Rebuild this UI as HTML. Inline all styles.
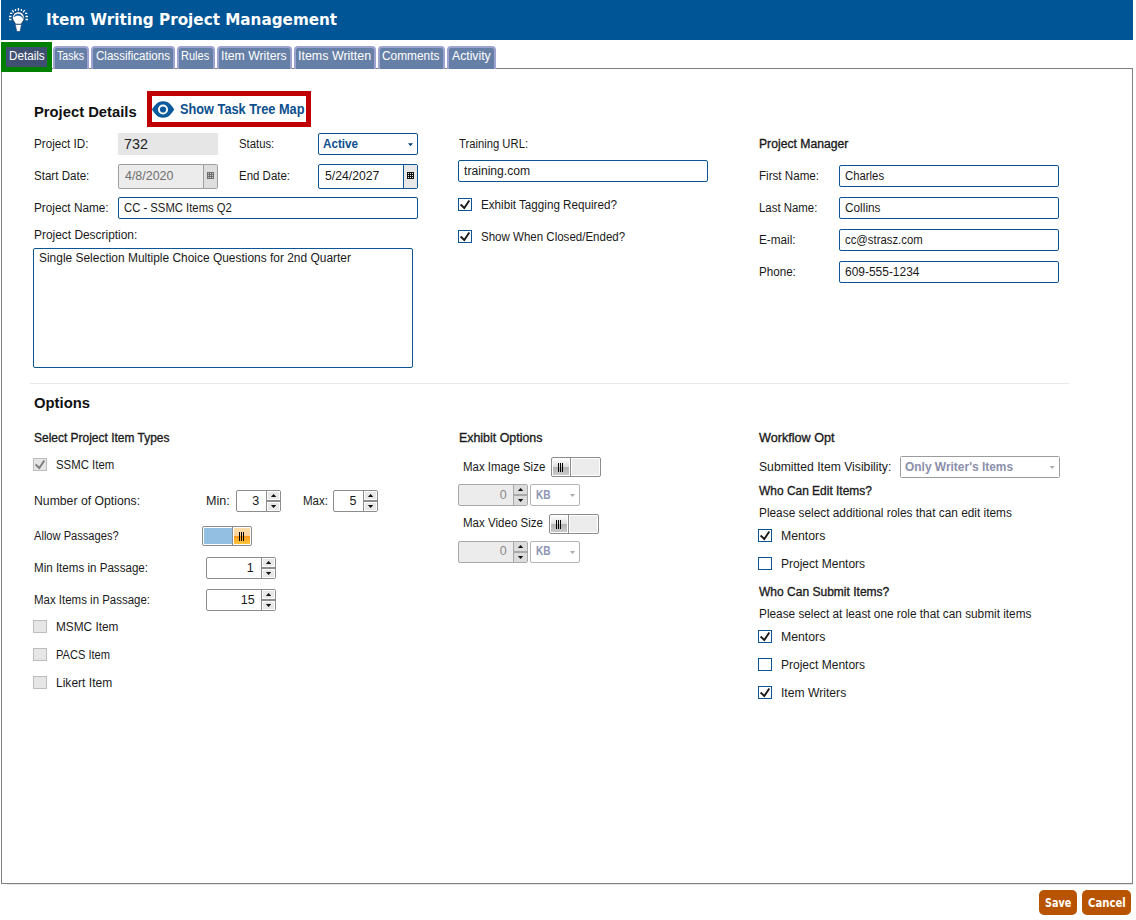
<!DOCTYPE html>
<html><head><meta charset="utf-8"><title>Item Writing Project Management</title>
<style>
*{box-sizing:border-box;margin:0;padding:0}
html,body{width:1136px;height:920px;background:#fff;overflow:hidden}
body{position:relative;font-family:"Liberation Sans","DejaVu Sans",sans-serif;font-size:12px;color:#1a1a1a}
.a{position:absolute}
.x{position:absolute;white-space:nowrap;line-height:20px;transform-origin:0 0}
.hdr{left:1px;top:0;width:1132px;height:40px;background:#005596}
.tab{top:46px;height:23px;background:#667fa7;border:2px solid #9ea3d0;border-bottom:none;border-radius:4px 4px 0 0}
.tabsel{left:1px;top:42px;width:51px;height:30px;background:#3f4f72;border:5px solid #008000}
.panel{left:1px;top:68px;width:1132px;height:816px;border:1px solid #808080;background:#fff}
.inp{border:1px solid #0b5596;border-radius:2px;background:#fff}
.cb{width:14px;height:13px;border:1px solid #0b5596;background:#fff}
.cbd{border-color:#bdbdbd;background:#e6e6e6}
.spin{height:22px;border:1px solid #8c8c8c;border-radius:2px;background:#fff;overflow:hidden}
.spin i{position:absolute;right:0;top:0;width:14px;height:20px;border-left:1px solid #8c8c8c;background:#fff}
.spin i:before{content:"";position:absolute;left:1px;top:1px;width:11px;height:7px;background:#e8e8e8}
.spin i:after{content:"";position:absolute;left:1px;top:12px;width:11px;height:7px;background:#e8e8e8}
.spin b{position:absolute;right:0;top:9px;width:13px;height:2px;background:#8c8c8c}
.spin.d{background:#ececec;border-color:#a8a8a8}
.spin.d i{border-color:#a8a8a8;background:#dcdcdc}
.spin.d i:before,.spin.d i:after{background:#dcdcdc}
.spin.d b{background:#a8a8a8}
.tri{position:absolute;width:5.400px;height:3px;background:#111}
.up{clip-path:polygon(50% 0,100% 100%,0 100%)}
.dn{clip-path:polygon(0 0,100% 0,50% 100%)}
.tog{width:50px;height:20px;border:1px solid #8c8c8c;border-radius:2px;background:#fff}
.btn{top:890px;height:25px;background:#b85400;border-radius:5px}
</style></head><body>
<div class="a hdr"></div>
<svg class="a" style="left:4px;top:4px" width="30" height="32" viewBox="4 4 30 32">
<g stroke="#fff" stroke-width="1.3" stroke-linecap="butt" fill="none">
<path d="M18.400 8v2.800M15.500 9v1.900M21.400 9v1.900M12.200 10.200l1.700 2.100M24.700 10.200l-1.700 2.100M10 13.400h2.300M9 16.500h2.400M9 19.500h2.400M25 13.400h2.300M25.500 16.500h2.400M25.500 19.500h2.400"/>
</g>
<path d="M18.400 11.700a5.900 5.900 0 0 0-5.900 5.900c0 2 .9 3.300 1.900 4.500.6.700.8 1.400.9 2.100h6.200c.100-.700.300-1.400.900-2.100 1-1.200 1.900-2.500 1.900-4.500a5.900 5.900 0 0 0-5.900-5.900z" fill="#fff" stroke="#1e3558" stroke-width=".8"/>
<path d="M15.300 24.500h6.200l-1.300 6.200c-.1.500-.5.800-1 .8h-1.600c-.5 0-.9-.3-1-.8z" fill="#fff" stroke="#27406a" stroke-width=".6"/>
<path d="M15.200 28.200h6.400" stroke="#27406a" stroke-width=".5" opacity=".0"/>
<path d="M14 16.800C15.300 13 21.800 12.200 23.300 18.700C21.300 14.600 16.600 14.700 14 16.800z" fill="#0a5a9c" stroke="#0a5a9c" stroke-width=".5" stroke-linejoin="round"/>
</svg>

<div class="a" style="left:7px;top:884px;width:1126px;height:1px;background:#e6e6e6"></div>
<div class="a panel"></div>
<div class="a tabsel"></div>
<div class="a tab" style="left:52.500px;width:36.500px"></div>
<div class="a tab" style="left:91px;width:84px"></div>
<div class="a tab" style="left:177px;width:38px"></div>
<div class="a tab" style="left:217px;width:75px"></div>
<div class="a tab" style="left:294px;width:82px"></div>
<div class="a tab" style="left:378px;width:67px"></div>
<div class="a tab" style="left:447px;width:49px"></div>

<!-- red highlight + eye -->
<div class="a" style="left:147px;top:91px;width:164px;height:36px;border:5px solid #c00000"></div>
<svg class="a" style="left:151px;top:100px" width="24" height="19" viewBox="151 100 24 19">
<path d="M152 109.500C153.800 106.400 156.200 103.600 158.400 102.300C160 101.500 161.500 101.200 163 101.200C164.600 101.200 166.200 101.500 167.800 102.300C170 103.600 172.400 106.400 174.200 109.500C172.400 112.600 170 115.400 167.800 116.700C166.200 117.500 164.600 117.800 163 117.800C161.500 117.800 160 117.500 158.400 116.700C156.200 115.400 153.800 112.600 152 109.500Z" fill="#0b5a9d"/>
<circle cx="163" cy="109.500" r="5" fill="#fff"/><circle cx="163" cy="109.500" r="3.100" fill="#0b5a9d"/>
</svg>

<!-- project details fields -->
<div class="a" style="left:118px;top:133px;width:100px;height:22px;background:#e6e6e6"></div>
<div class="a inp" style="left:318px;top:133px;width:100px;height:22px"></div>
<div class="tri dn" style="left:408px;top:143.200px;width:5px;background:#0b3f74"></div>
<div class="a inp" style="left:118px;top:164px;width:100px;height:25px;background:#ececec;border-color:#a0a0a0"></div>
<div class="a" style="left:203px;top:165px;width:14px;height:23px;background:#dedede;border-left:1px solid #a0a0a0;border-radius:0 1px 1px 0"></div>
<svg class="a" style="left:207px;top:172px" width="7" height="7" viewBox="0 0 7 7"><rect width="7" height="7" fill="#6e6e6e"/><g fill="#cfcfcf"><rect x="1" y="1" width="1" height="1"/><rect x="3" y="1" width="1" height="1"/><rect x="5" y="1" width="1" height="1"/><rect x="1" y="3" width="1" height="1"/><rect x="3" y="3" width="1" height="1"/><rect x="5" y="3" width="1" height="1"/><rect x="1" y="5" width="1" height="1"/><rect x="3" y="5" width="1" height="1"/><rect x="5" y="5" width="1" height="1"/></g></svg>
<div class="a inp" style="left:318px;top:164px;width:100px;height:25px"></div>
<div class="a" style="left:403px;top:165px;width:14px;height:23px;background:#e8e8e8;border-left:1px solid #0b5596;border-radius:0 1px 1px 0"></div>
<svg class="a" style="left:407px;top:172px" width="7" height="7" viewBox="0 0 7 7"><rect width="7" height="7" fill="#111"/><g fill="#e8e8e8"><rect x="1" y="1" width="1" height="1"/><rect x="3" y="1" width="1" height="1"/><rect x="5" y="1" width="1" height="1"/><rect x="1" y="3" width="1" height="1"/><rect x="3" y="3" width="1" height="1"/><rect x="5" y="3" width="1" height="1"/><rect x="1" y="5" width="1" height="1"/><rect x="3" y="5" width="1" height="1"/><rect x="5" y="5" width="1" height="1"/></g></svg>
<div class="a inp" style="left:118px;top:197px;width:300px;height:22px"></div>
<div class="a inp" style="left:33px;top:248px;width:380px;height:120px"></div>

<div class="a inp" style="left:458px;top:160px;width:250px;height:22px"></div>
<div class="a cb" style="left:458px;top:198px"></div>
<div class="a cb" style="left:458px;top:230px"></div>

<div class="a inp" style="left:839px;top:165px;width:220px;height:22px"></div>
<div class="a inp" style="left:839px;top:197px;width:220px;height:22px"></div>
<div class="a inp" style="left:839px;top:229px;width:220px;height:22px"></div>
<div class="a inp" style="left:839px;top:261px;width:220px;height:22px"></div>

<div class="a" style="left:30px;top:383px;width:1039px;height:1px;background:#e9e9e9"></div>

<!-- options left -->
<div class="a cb cbd" style="left:33px;top:458px"></div>
<div class="a cb cbd" style="left:33px;top:620px"></div>
<div class="a cb cbd" style="left:33px;top:648px"></div>
<div class="a cb cbd" style="left:33px;top:676px"></div>

<div class="a spin" style="left:236px;top:490px;width:45px"><i></i><b></b><div class="tri up" style="left:33.900px;top:3px"></div><div class="tri dn" style="left:33.900px;top:14px"></div></div>
<div class="a spin" style="left:333px;top:490px;width:45px"><i></i><b></b><div class="tri up" style="left:33.900px;top:3px"></div><div class="tri dn" style="left:33.900px;top:14px"></div></div>
<div class="a spin" style="left:206px;top:557px;width:70px"><i></i><b></b><div class="tri up" style="left:58.900px;top:3px"></div><div class="tri dn" style="left:58.900px;top:14px"></div></div>
<div class="a spin" style="left:206px;top:589px;width:70px"><i></i><b></b><div class="tri up" style="left:58.900px;top:3px"></div><div class="tri dn" style="left:58.900px;top:14px"></div></div>

<!-- toggle on -->
<div class="a tog" style="left:202px;top:526px"></div>
<div class="a" style="left:204px;top:528px;width:28px;height:16px;background:#92bfe2"></div>
<div class="a" style="left:232px;top:527px;width:1px;height:18px;background:#8c8c8c"></div>
<div class="a" style="left:234px;top:528px;width:16px;height:16px;background:linear-gradient(#ffdcaa 0,#ffd39a 50%,#ff981c 50%,#ffc53e 100%)"></div>
<div class="a" style="left:239px;top:532px;width:5px;height:9px;background:linear-gradient(90deg,#000 0 1px,transparent 1px 2px,#000 2px 3px,transparent 3px 4px,#000 4px 5px)"></div>

<!-- exhibit toggles -->
<div class="a tog" style="left:551px;top:457px"></div>
<div class="a" style="left:553px;top:459px;width:16px;height:16px;background:linear-gradient(#fdfdfd 0,#dedede 50%,#b2b2b2 50%,#cacaca 100%)"></div>
<div class="a" style="left:570px;top:458px;width:1px;height:18px;background:#8c8c8c"></div>
<div class="a" style="left:572px;top:459px;width:27px;height:16px;background:#ececec"></div>
<div class="a" style="left:558px;top:463px;width:5px;height:9px;background:linear-gradient(90deg,#000 0 1px,transparent 1px 2px,#000 2px 3px,transparent 3px 4px,#000 4px 5px)"></div>

<div class="a tog" style="left:549px;top:514px"></div>
<div class="a" style="left:551px;top:516px;width:16px;height:16px;background:linear-gradient(#fdfdfd 0,#dedede 50%,#b2b2b2 50%,#cacaca 100%)"></div>
<div class="a" style="left:568px;top:515px;width:1px;height:18px;background:#8c8c8c"></div>
<div class="a" style="left:570px;top:516px;width:27px;height:16px;background:#ececec"></div>
<div class="a" style="left:556px;top:520px;width:5px;height:9px;background:linear-gradient(90deg,#000 0 1px,transparent 1px 2px,#000 2px 3px,transparent 3px 4px,#000 4px 5px)"></div>

<div class="a spin d" style="left:458px;top:484px;width:70px"><i></i><b></b><div class="tri up" style="left:58.900px;top:3px"></div><div class="tri dn" style="left:58.900px;top:14px"></div></div>
<div class="a" style="left:530px;top:484px;width:50px;height:22px;border:1px solid #b4b4b4;border-radius:2px;background:#fff"></div>
<div class="tri dn" style="left:569.800px;top:494px;background:#b0b0b0"></div>
<div class="a spin d" style="left:458px;top:541px;width:70px"><i></i><b></b><div class="tri up" style="left:58.900px;top:3px"></div><div class="tri dn" style="left:58.900px;top:14px"></div></div>
<div class="a" style="left:530px;top:541px;width:50px;height:22px;border:1px solid #b4b4b4;border-radius:2px;background:#fff"></div>
<div class="tri dn" style="left:569.800px;top:551px;background:#b0b0b0"></div>

<!-- workflow -->
<div class="a" style="left:900px;top:456px;width:160px;height:22px;border:1px solid #9c9c9c;border-radius:1.500px;background:#fff"></div>
<div class="tri dn" style="left:1049.500px;top:466px;background:#b0b0b0"></div>
<div class="a cb" style="left:758px;top:529px"></div>
<div class="a cb" style="left:758px;top:557px"></div>
<div class="a cb" style="left:758px;top:630px"></div>
<div class="a cb" style="left:758px;top:658px"></div>
<div class="a cb" style="left:758px;top:686px"></div>

<!-- check marks -->
<svg class="a" style="left:0;top:0;pointer-events:none" width="1136" height="920">
<g fill="none" stroke="#1a1a1a" stroke-width="1.900" stroke-linejoin="miter">
<path id="ck" d="M460.600 204.500l3.700 3.500 5-7.600"/>
<path d="M460.600 236.500l3.700 3.500 5-7.600"/>
<path d="M760.600 535.500l3.700 3.500 5-7.600"/>
<path d="M760.600 636.500l3.700 3.500 5-7.600"/>
<path d="M760.600 692.500l3.700 3.500 5-7.600"/>
</g>
<path d="M35.600 464.500l3.700 3.500 5-7.600" fill="none" stroke="#7d7d7d" stroke-width="1.900"/>
</svg>

<div class="a btn" style="left:1039px;width:38px"></div>
<div class="a btn" style="left:1082px;width:49px"></div>

<div class="x" style="left:45.98px;top:10.00px;font-size:16.5px;font-weight:bold;color:#fff;font-family:'DejaVu Sans Condensed','Liberation Sans',sans-serif;transform:scaleX(1.0242);">Item Writing Project Management</div>
<div class="x" style="left:8.80px;top:46.00px;font-size:12px;color:#fff;transform:scaleX(0.9733);">Details</div>
<div class="x" style="left:56.80px;top:46.00px;font-size:12px;color:#fff;transform:scaleX(0.8786);">Tasks</div>
<div class="x" style="left:95.55px;top:46.00px;font-size:12px;color:#fff;transform:scaleX(0.9642);">Classifications</div>
<div class="x" style="left:181.30px;top:46.00px;font-size:12px;color:#fff;transform:scaleX(0.9192);">Rules</div>
<div class="x" style="left:220.98px;top:46.00px;font-size:12px;color:#fff;transform:scaleX(1.0182);">Item Writers</div>
<div class="x" style="left:298.06px;top:46.00px;font-size:12px;color:#fff;transform:scaleX(1.0380);">Items Written</div>
<div class="x" style="left:382.30px;top:46.00px;font-size:12px;color:#fff;transform:scaleX(0.9894);">Comments</div>
<div class="x" style="left:451.70px;top:46.00px;font-size:12px;color:#fff;transform:scaleX(1.0183);">Activity</div>
<div class="x" style="left:33.72px;top:102.00px;font-size:15px;font-weight:bold;color:#111;transform:scaleX(0.9848);">Project Details</div>
<div class="x" style="left:180.00px;top:99.00px;font-size:14px;font-weight:bold;color:#0b4f8e;transform:scaleX(0.9110);">Show Task Tree Map</div>
<div class="x" style="left:33.80px;top:134.00px;font-size:12px;transform:scaleX(0.9734);">Project ID:</div>
<div class="x" style="left:123.80px;top:134.00px;font-size:15.5px;color:#222;transform:scaleX(0.9231);">732</div>
<div class="x" style="left:238.80px;top:134.00px;font-size:12px;transform:scaleX(0.9441);">Status:</div>
<div class="x" style="left:323.20px;top:134.00px;font-size:13px;font-weight:bold;color:#0b4f8e;transform:scaleX(0.8972);">Active</div>
<div class="x" style="left:33.80px;top:166.00px;font-size:12px;transform:scaleX(0.9636);">Start Date:</div>
<div class="x" style="left:124.80px;top:166.20px;font-size:13px;color:#6e6e6e;transform:scaleX(0.9569);">4/8/2020</div>
<div class="x" style="left:238.80px;top:166.00px;font-size:12px;transform:scaleX(0.9560);">End Date:</div>
<div class="x" style="left:325.20px;top:166.00px;font-size:13px;transform:scaleX(0.9392);">5/24/2027</div>
<div class="x" style="left:33.80px;top:198.00px;font-size:12px;transform:scaleX(0.9803);">Project Name:</div>
<div class="x" style="left:123.55px;top:198.00px;font-size:12px;transform:scaleX(0.9408);">CC - SSMC Items Q2</div>
<div class="x" style="left:33.80px;top:225.00px;font-size:12px;transform:scaleX(0.9927);">Project Description:</div>
<div class="x" style="left:38.80px;top:248.00px;font-size:12px;transform:scaleX(0.9950);">Single Selection Multiple Choice Questions for 2nd Quarter</div>
<div class="x" style="left:458.80px;top:134.00px;font-size:12px;transform:scaleX(0.9379);">Training URL:</div>
<div class="x" style="left:463.80px;top:161.00px;font-size:12px;transform:scaleX(1.0128);">training.com</div>
<div class="x" style="left:481.05px;top:195.00px;font-size:12px;transform:scaleX(0.9717);">Exhibit Tagging Required?</div>
<div class="x" style="left:481.05px;top:227.00px;font-size:12px;transform:scaleX(0.9603);">Show When Closed/Ended?</div>
<div class="x" style="left:758.80px;top:134.00px;font-size:12px;-webkit-text-stroke:.32px currentColor;transform:scaleX(1.0142);">Project Manager</div>
<div class="x" style="left:758.80px;top:166.00px;font-size:12px;transform:scaleX(0.9681);">First Name:</div>
<div class="x" style="left:844.50px;top:166.00px;font-size:12px;transform:scaleX(0.9456);">Charles</div>
<div class="x" style="left:758.80px;top:198.00px;font-size:12px;transform:scaleX(0.9504);">Last Name:</div>
<div class="x" style="left:844.50px;top:198.00px;font-size:12px;transform:scaleX(0.9858);">Collins</div>
<div class="x" style="left:758.80px;top:230.00px;font-size:12px;transform:scaleX(0.9783);">E-mail:</div>
<div class="x" style="left:844.50px;top:230.00px;font-size:12px;transform:scaleX(0.9453);">cc@strasz.com</div>
<div class="x" style="left:758.80px;top:262.00px;font-size:12px;transform:scaleX(0.9682);">Phone:</div>
<div class="x" style="left:844.50px;top:262.00px;font-size:12px;transform:scaleX(0.9966);">609-555-1234</div>
<div class="x" style="left:33.80px;top:393.00px;font-size:15px;font-weight:bold;color:#111;transform:scaleX(0.9890);">Options</div>
<div class="x" style="left:33.80px;top:428.00px;font-size:12px;-webkit-text-stroke:.32px currentColor;transform:scaleX(0.9974);">Select Project Item Types</div>
<div class="x" style="left:55.55px;top:455.00px;font-size:12px;transform:scaleX(0.9487);">SSMC Item</div>
<div class="x" style="left:33.80px;top:491.00px;font-size:12px;transform:scaleX(1.0192);">Number of Options:</div>
<div class="x" style="left:205.60px;top:491.00px;font-size:12px;transform:scaleX(1.0476);">Min:</div>
<div class="x" style="left:252.30px;top:491.00px;font-size:12.5px;">3</div>
<div class="x" style="left:303.00px;top:491.00px;font-size:12px;transform:scaleX(0.9622);">Max:</div>
<div class="x" style="left:349.60px;top:491.00px;font-size:12.5px;">5</div>
<div class="x" style="left:33.80px;top:526.00px;font-size:12px;transform:scaleX(0.9263);">Allow Passages?</div>
<div class="x" style="left:33.80px;top:558.00px;font-size:12px;transform:scaleX(0.9659);">Min Items in Passage:</div>
<div class="x" style="left:246.80px;top:558.00px;font-size:12.5px;">1</div>
<div class="x" style="left:33.80px;top:590.00px;font-size:12px;transform:scaleX(0.9558);">Max Items in Passage:</div>
<div class="x" style="left:240.75px;top:590.00px;font-size:12.5px;">15</div>
<div class="x" style="left:55.55px;top:617.00px;font-size:12px;transform:scaleX(0.9860);">MSMC Item</div>
<div class="x" style="left:55.55px;top:645.00px;font-size:12px;transform:scaleX(0.9228);">PACS Item</div>
<div class="x" style="left:55.55px;top:673.00px;font-size:12px;transform:scaleX(1.0032);">Likert Item</div>
<div class="x" style="left:458.80px;top:428.00px;font-size:12px;-webkit-text-stroke:.32px currentColor;transform:scaleX(1.0334);">Exhibit Options</div>
<div class="x" style="left:463.00px;top:457.00px;font-size:12px;transform:scaleX(0.9565);">Max Image Size</div>
<div class="x" style="left:499.70px;top:485.00px;font-size:12.5px;color:#8a8a8a;">0</div>
<div class="x" style="left:535.80px;top:485.00px;font-size:12.5px;font-weight:bold;color:#8e94b4;transform:scaleX(0.8043);">KB</div>
<div class="x" style="left:463.00px;top:513.00px;font-size:12px;transform:scaleX(0.9619);">Max Video Size</div>
<div class="x" style="left:499.70px;top:541.00px;font-size:12.5px;color:#8a8a8a;">0</div>
<div class="x" style="left:535.80px;top:541.00px;font-size:12.5px;font-weight:bold;color:#8e94b4;transform:scaleX(0.8043);">KB</div>
<div class="x" style="left:758.80px;top:428.00px;font-size:12px;-webkit-text-stroke:.32px currentColor;transform:scaleX(1.0516);">Workflow Opt</div>
<div class="x" style="left:758.80px;top:457.00px;font-size:12px;transform:scaleX(1.0141);">Submitted Item Visibility:</div>
<div class="x" style="left:905.00px;top:457.00px;font-size:13px;font-weight:bold;color:#8b8fab;transform:scaleX(0.9183);">Only Writer's Items</div>
<div class="x" style="left:758.80px;top:481.00px;font-size:12px;-webkit-text-stroke:.32px currentColor;transform:scaleX(0.9956);">Who Can Edit Items?</div>
<div class="x" style="left:758.80px;top:503.00px;font-size:12px;transform:scaleX(0.9873);">Please select additional roles that can edit items</div>
<div class="x" style="left:780.60px;top:526.00px;font-size:12px;transform:scaleX(1.0220);">Mentors</div>
<div class="x" style="left:780.60px;top:554.00px;font-size:12px;transform:scaleX(1.0008);">Project Mentors</div>
<div class="x" style="left:758.80px;top:582.00px;font-size:12px;-webkit-text-stroke:.32px currentColor;transform:scaleX(1.0017);">Who Can Submit Items?</div>
<div class="x" style="left:758.80px;top:604.00px;font-size:12px;transform:scaleX(0.9841);">Please select at least one role that can submit items</div>
<div class="x" style="left:780.60px;top:627.00px;font-size:12px;transform:scaleX(1.0220);">Mentors</div>
<div class="x" style="left:780.60px;top:655.00px;font-size:12px;transform:scaleX(1.0008);">Project Mentors</div>
<div class="x" style="left:780.59px;top:683.00px;font-size:12px;transform:scaleX(1.0119);">Item Writers</div>
<div class="x" style="left:1044.90px;top:893.00px;font-size:11.7px;font-weight:bold;color:#fff;font-family:'DejaVu Sans Condensed','Liberation Sans',sans-serif;transform:scaleX(0.9151);">Save</div>
<div class="x" style="left:1088.00px;top:893.00px;font-size:11.7px;font-weight:bold;color:#fff;font-family:'DejaVu Sans Condensed','Liberation Sans',sans-serif;transform:scaleX(0.9622);">Cancel</div>

</body></html>
